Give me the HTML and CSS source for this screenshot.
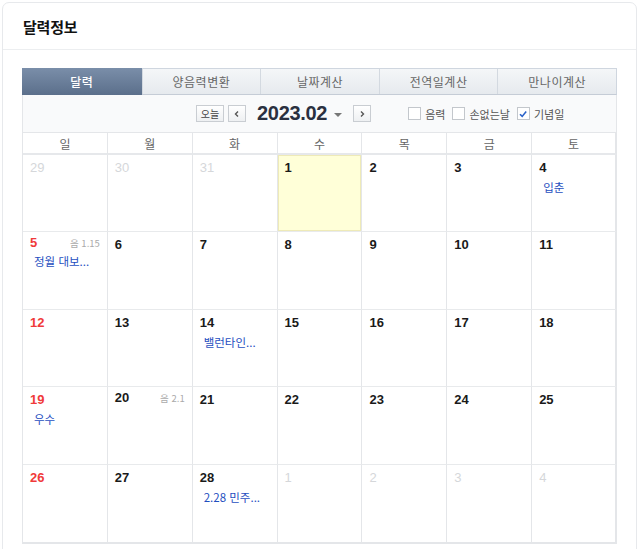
FILE: index.html
```html
<!DOCTYPE html>
<html lang="ko">
<head>
<meta charset="utf-8">
<link rel="stylesheet" href="styles.css">
</head>
<body>
<div class="card">
  <div class="card-head"><h2 class="title">달력정보</h2></div>
  <div class="card-body">
    <div class="tabs">
      <div class="tab active">달력</div>
      <div class="tab">양음력변환</div>
      <div class="tab">날짜계산</div>
      <div class="tab">전역일계산</div>
      <div class="tab">만나이계산</div>
    </div>
    <div class="toolbar">
      <div class="nav">
        <span class="btn today">오늘</span>
        <span class="btn arrow"><svg width="8" height="8" viewBox="0 0 8 8"><path d="M5 1.5 L2.5 4 L5 6.5" fill="none" stroke="#555" stroke-width="1.4"/></svg></span>
        <span class="month">2023.02</span>
        <span class="caret"></span>
        <span class="btn arrow"><svg width="8" height="8" viewBox="0 0 8 8"><path d="M3 1.5 L5.5 4 L3 6.5" fill="none" stroke="#555" stroke-width="1.4"/></svg></span>
      </div>
      <div class="opts">
        <label class="opt"><span class="box"></span>음력</label>
        <label class="opt"><span class="box"></span>손없는날</label>
        <label class="opt"><span class="box checked"><svg width="10" height="10" viewBox="0 0 10 10"><path d="M2 5.2 L4.2 7.4 L8.2 2.6" fill="none" stroke="#2a62c9" stroke-width="1.6"/></svg></span>기념일</label>
      </div>
    </div>
    <div class="cal">
      <div class="wd">일</div><div class="wd">월</div><div class="wd">화</div><div class="wd">수</div><div class="wd">목</div><div class="wd">금</div><div class="wd">토</div>

      <div class="day other"><span class="num">29</span></div>
      <div class="day other"><span class="num">30</span></div>
      <div class="day other"><span class="num">31</span></div>
      <div class="day today-cell"><span class="num">1</span></div>
      <div class="day"><span class="num">2</span></div>
      <div class="day"><span class="num">3</span></div>
      <div class="day"><span class="num">4</span><div class="ev">입춘</div></div>

      <div class="day sun"><div class="top"><span class="num">5</span><span class="lunar">음 1.15</span></div><div class="ev">정월 대보...</div></div>
      <div class="day"><span class="num">6</span></div>
      <div class="day"><span class="num">7</span></div>
      <div class="day"><span class="num">8</span></div>
      <div class="day"><span class="num">9</span></div>
      <div class="day"><span class="num">10</span></div>
      <div class="day"><span class="num">11</span></div>

      <div class="day sun"><span class="num">12</span></div>
      <div class="day"><span class="num">13</span></div>
      <div class="day"><span class="num">14</span><div class="ev">밸런타인...</div></div>
      <div class="day"><span class="num">15</span></div>
      <div class="day"><span class="num">16</span></div>
      <div class="day"><span class="num">17</span></div>
      <div class="day"><span class="num">18</span></div>

      <div class="day sun"><span class="num">19</span><div class="ev">우수</div></div>
      <div class="day"><div class="top"><span class="num">20</span><span class="lunar">음 2.1</span></div></div>
      <div class="day"><span class="num">21</span></div>
      <div class="day"><span class="num">22</span></div>
      <div class="day"><span class="num">23</span></div>
      <div class="day"><span class="num">24</span></div>
      <div class="day"><span class="num">25</span></div>

      <div class="day sun"><span class="num">26</span></div>
      <div class="day"><span class="num">27</span></div>
      <div class="day"><span class="num">28</span><div class="ev">2.28 민주...</div></div>
      <div class="day other"><span class="num">1</span></div>
      <div class="day other"><span class="num">2</span></div>
      <div class="day other"><span class="num">3</span></div>
      <div class="day other"><span class="num">4</span></div>
    </div>
  </div>
</div>
</body>
</html>
```
FILE: styles.css
```css
* { box-sizing: border-box; }
html, body { margin: 0; padding: 0; background: #ffffff; }
body {
  font-family: "Noto Sans CJK KR", "Noto Sans", sans-serif;
  color: #222;
  overflow: hidden;
}
.card {
  margin: 2px 3px 0 2px;
  border: 1px solid #e7e9ec;
  border-radius: 7px;
  height: 600px;
  background: #fff;
}
.card-head {
  height: 47px;
  border-bottom: 1px solid #eceef0;
  display: flex;
  align-items: center;
  padding-left: 20px;
}
.title {
  margin: 0;
  font-size: 15px;
  font-weight: 700;
  color: #111;
  letter-spacing: -0.2px;
}
.card-body {
  padding: 18px 19px 0 19px;
}
.tabs {
  display: grid;
  grid-template-columns: repeat(5, 1fr);
  height: 27px;
  border: 1px solid #cfd6df;
  border-bottom: 1px solid #c5ccd6;
  background: linear-gradient(#f4f6f8, #e6eaee);
}
.tab {
  display: flex;
  align-items: center;
  justify-content: center;
  font-size: 12px;
  color: #666;
  border-left: 1px solid #d3d9e0;
  letter-spacing: 0.5px;
}
.tab:first-child { border-left: none; }
.tab.active {
  background: linear-gradient(#7a8ea9, #5b6f8b);
  color: #fff;
  margin: -1px 0 -1px -1px;
  font-weight: 500;
}
.toolbar {
  height: 37px;
  display: flex;
  align-items: center;
  background: #f9fafb;
  border-left: 1px solid #e4e6e9;
  border-right: 1px solid #e4e6e9;
  padding-left: 173px;
}
.nav { display: flex; align-items: center; }
.btn {
  display: inline-flex;
  align-items: center;
  justify-content: center;
  height: 17px;
  border: 1px solid #c9cdd2;
  background: linear-gradient(#ffffff, #eef0f2);
  font-size: 10px;
  color: #444;
}
.btn.today { width: 28px; margin-right: 4px; }
.btn.arrow { width: 18px; }
.month {
  font-family: "Liberation Sans", Arial, sans-serif;
  font-weight: bold;
  font-size: 20px;
  color: #2a3040;
  margin-left: 11px;
  letter-spacing: -0.3px;
}
.caret {
  width: 0; height: 0;
  border-left: 4px solid transparent;
  border-right: 4px solid transparent;
  border-top: 4px solid #777;
  margin: 2px 11px 0 7px;
}
.opts { display: flex; align-items: center; margin-left: 37px; }
.opt {
  display: flex;
  align-items: center;
  font-size: 11px;
  color: #555;
  margin-right: 7px;
}
.box {
  width: 13px; height: 13px;
  border: 1px solid #c3c7cc;
  background: #fff;
  margin-right: 4px;
  display: inline-flex;
  align-items: center;
  justify-content: center;
}
.cal {
  display: grid;
  grid-template-columns: repeat(7, 1fr);
  grid-template-rows: 22px repeat(5, 77.4px);
  border-left: 1px solid #e4e6e9;
  border-bottom: 2px solid #e4e6e9;
  border-top: 1px solid #e4e6e9;
}
.wd {
  display: flex;
  align-items: center;
  justify-content: center;
  font-size: 12px;
  color: #666;
  border-right: 1px solid #e4e6e9;
  border-bottom: 2px solid #e6e8eb;
}
.day {
  border-right: 1px solid #e4e6e9;
  border-bottom: 1px solid #e8eaec;
  padding: 3px 7px 0 7px;
  font-family: "Liberation Sans", Arial, sans-serif;
}
.day:nth-last-child(-n+7) { border-bottom: none; }
.cal > .day:nth-child(7n) { border-right: 2px solid #e4e6e9; }
.cal > .wd:nth-child(7) { border-right: 2px solid #e4e6e9; }
.top { display: flex; justify-content: space-between; align-items: baseline; }
.num {
  font-size: 13px;
  font-weight: bold;
  color: #1a1a1a;
}
.other .num { color: #d5d7da; font-weight: normal; }
.sun .num { color: #f03a3a; }
.lunar {
  font-family: "Noto Sans CJK KR", sans-serif;
  font-size: 9.5px;
  color: #aaa;
}
.ev {
  font-family: "Noto Sans CJK KR", sans-serif;
  font-size: 11.5px;
  color: #1f4fbf;
  margin-top: 3px;
  padding-left: 4px;
  white-space: nowrap;
}
.today-cell {
  background: #ffffd8;
  box-shadow: inset 0 0 0 1px #eeeab8;
}
```
